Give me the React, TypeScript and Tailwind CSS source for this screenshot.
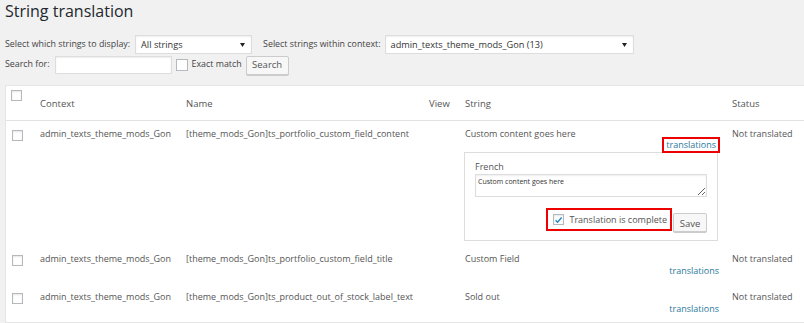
import React from 'react';

type Row = {
  context: string;
  name: string;
  value: string;
  status: string;
  open?: boolean;
};

const rows: Row[] = [
  { context: 'admin_texts_theme_mods_Gon', name: '[theme_mods_Gon]ts_portfolio_custom_field_content', value: 'Custom content goes here', status: 'Not translated', open: true },
  { context: 'admin_texts_theme_mods_Gon', name: '[theme_mods_Gon]ts_portfolio_custom_field_title', value: 'Custom Field', status: 'Not translated' },
  { context: 'admin_texts_theme_mods_Gon', name: '[theme_mods_Gon]ts_product_out_of_stock_label_text', value: 'Sold out', status: 'Not translated' },
];

function Box({ checked = false }: { checked?: boolean }) {
  return (
    <span className="inline-flex w-[11px] h-[11px] shrink-0 items-center justify-center border border-[#b4b9be] bg-white shadow-[inset_0_1px_2px_rgba(0,0,0,0.1)]">
      {checked && (
        <svg width="10" height="10" viewBox="0 0 10 10">
          <path d="M1.8 5.2 L4 7.4 L8.4 2.2" fill="none" stroke="#1e8cbe" strokeWidth="1.6" />
        </svg>
      )}
    </span>
  );
}

function Select({ label, width }: { label: string; width: string }) {
  return (
    <div className={`flex h-[19px] items-center justify-between border border-[#ddd] bg-white pl-[5px] pr-[6px] text-[9.2px] text-[#333] shadow-[inset_0_1px_2px_rgba(0,0,0,0.07)] ${width}`}>
      <span>{label}</span>
      <svg width="5" height="4" viewBox="0 0 5 4">
        <path d="M0 0 H5 L2.5 4 Z" fill="#222" />
      </svg>
    </div>
  );
}

export default function App() {
  return (
    <div className="min-h-screen w-full overflow-hidden bg-[#f1f1f1] font-['Open_Sans',sans-serif] text-[8.85px] text-[#444]">
      <h1 className="pl-[5px] pt-[1px] text-[16px] leading-[20px] text-[#23282d]">String translation</h1>

      <div className="mt-[14px] flex items-center pl-[5px]">
        <span>Select which strings to display:</span>
        <div className="ml-[5px]">
          <Select label="All strings" width="w-[117px]" />
        </div>
        <span className="ml-[11px]">Select strings within context:</span>
        <div className="ml-[4px]">
          <Select label="admin_texts_theme_mods_Gon (13)" width="w-[249px]" />
        </div>
      </div>

      <div className="mt-[1px] flex h-[20px] items-center pl-[5px]">
        <span>Search for:</span>
        <div className="ml-[5px] h-[18px] w-[117px] border border-[#ddd] bg-white shadow-[inset_0_1px_2px_rgba(0,0,0,0.07)]" />
        <span className="ml-[4px] inline-flex h-[12px] w-[12px] border border-[#b4b9be] bg-white" />
        <span className="ml-[4px]">Exact match</span>
        <button className="ml-[4px] h-[19px] w-[43px] rounded-[2px] border border-[#ccc] bg-[#f7f7f7] text-[9.5px] text-[#555] shadow-[0_1px_0_#ccc]">Search</button>
      </div>

      <div className="ml-[5px] mt-[10px] w-[810px] border border-[#e5e5e5] bg-white text-[9px] text-[#555]">
        <table className="w-full table-fixed">
          <colgroup>
            <col className="w-[24px]" />
            <col className="w-[146px]" />
            <col className="w-[243px]" />
            <col className="w-[36px]" />
            <col className="w-[267px]" />
            <col />
          </colgroup>
          <thead>
            <tr className="border-b border-[#e1e1e1]">
              <th className="pl-[5px] pt-[4px] text-left align-top"><Box /></th>
              <th className="pl-[10px] pt-[8px] pb-[7px] text-left align-top font-normal leading-[19px] text-[9.5px]">Context</th>
              <th className="pl-[10px] pt-[8px] pb-[7px] text-left align-top font-normal leading-[19px] text-[9.5px]">Name</th>
              <th className="pl-[10px] pt-[8px] pb-[7px] text-left align-top font-normal leading-[19px] text-[9.5px]">View</th>
              <th className="pl-[10px] pt-[8px] pb-[7px] text-left align-top font-normal leading-[19px] text-[9.5px]">String</th>
              <th className="pl-[10px] pt-[8px] pb-[7px] text-left align-top font-normal leading-[19px] text-[9.5px]">Status</th>
            </tr>
          </thead>
          <tbody>
            {rows.map((row, i) => (
              <tr key={i}>
                <td className="pl-[6px] pt-[9px] align-top"><Box /></td>
                <td className="pl-[10px] pt-[3px] align-top leading-[19px] whitespace-nowrap">{row.context}</td>
                <td className="pl-[10px] pt-[3px] align-top leading-[19px] whitespace-nowrap">{row.name}</td>
                <td className="pl-[10px] pt-[3px] align-top leading-[19px]"></td>
                <td className={`pl-[10px] pt-[3px] align-top leading-[19px] ${row.open ? 'pr-[2px] pb-[5px]' : 'pr-[3px] pb-[7px]'}`}>
                  <div>{row.value}</div>
                  {row.open ? (
                    <>
                      <div className="mt-[-6px] flex justify-end">
                        <span className="border-2 border-[#e00] px-[2px] leading-[12px] text-[#2b7a9b]">translations</span>
                      </div>
                      <div className="-ml-[1px] mr-[2px] mt-[-1px] border border-[#ddd] px-[10px] pb-[8px] pt-[7px]">
                        <div className="leading-[14px] text-[#555]">French</div>
                        <textarea
                          readOnly
                          defaultValue="Custom content goes here"
                          className="block h-[23px] w-full border border-[#ddd] px-[2px] py-[2px] text-[7px] leading-[10px] text-[#333] shadow-[inset_0_1px_2px_rgba(0,0,0,0.07)] outline-none"
                        />
                        <div className="mt-[11px] flex items-start justify-end">
                          <div className="flex h-[23px] items-center border-2 border-[#e00] pl-[5px] pr-[3px]">
                            <Box checked />
                            <span className="ml-[5px] text-[9px] text-[#555]">Translation is complete</span>
                          </div>
                          <button className="ml-[1px] mt-[5px] h-[19px] w-[34px] rounded-[2px] border border-[#ccc] bg-[#f7f7f7] text-[9.5px] text-[#555] shadow-[0_1px_0_#ccc]">Save</button>
                        </div>
                      </div>
                    </>
                  ) : (
                    <div className="mt-[-3px] text-right leading-[12px] text-[#2b7a9b]">translations</div>
                  )}
                </td>
                <td className="pl-[10px] pt-[3px] align-top leading-[19px] whitespace-nowrap">{row.status}</td>
              </tr>
            ))}
          </tbody>
        </table>
      </div>
    </div>
  );
}
